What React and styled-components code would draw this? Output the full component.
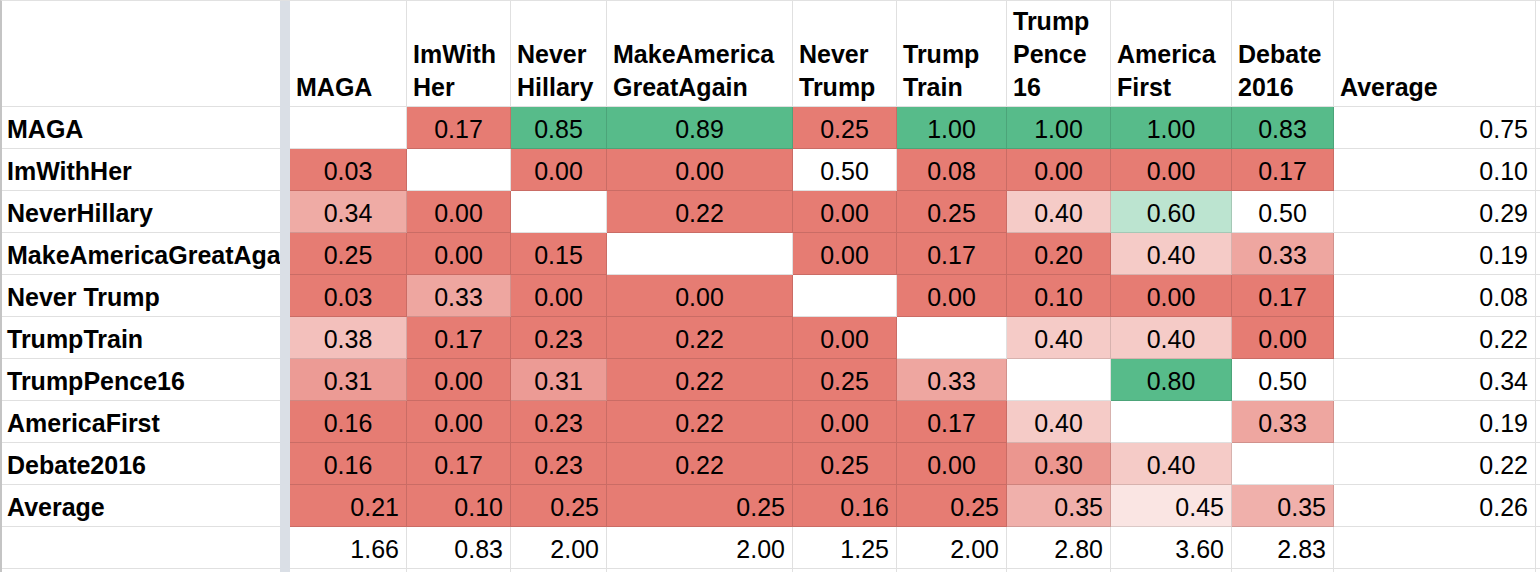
import React from "react";
import styled, { createGlobalStyle } from "styled-components";

const GlobalStyle = createGlobalStyle`
  html, body {
    margin: 0;
    padding: 0;
    background: #ffffff;
    overflow: hidden;
  }
  body {
    font-family: "Liberation Sans", Arial, sans-serif;
    color: #000;
  }
`;

const COLS = [
  "MAGA",
  "ImWith\nHer",
  "Never\nHillary",
  "MakeAmerica\nGreatAgain",
  "Never\nTrump",
  "Trump\nTrain",
  "Trump\nPence\n16",
  "America\nFirst",
  "Debate\n2016",
];

const ROWS = [
  ["MAGA", [null, 0.17, 0.85, 0.89, 0.25, 1.0, 1.0, 1.0, 0.83], 0.75],
  ["ImWithHer", [0.03, null, 0.0, 0.0, 0.5, 0.08, 0.0, 0.0, 0.17], 0.1],
  ["NeverHillary", [0.34, 0.0, null, 0.22, 0.0, 0.25, 0.4, 0.6, 0.5], 0.29],
  ["MakeAmericaGreatAgain", [0.25, 0.0, 0.15, null, 0.0, 0.17, 0.2, 0.4, 0.33], 0.19],
  ["Never Trump", [0.03, 0.33, 0.0, 0.0, null, 0.0, 0.1, 0.0, 0.17], 0.08],
  ["TrumpTrain", [0.38, 0.17, 0.23, 0.22, 0.0, null, 0.4, 0.4, 0.0], 0.22],
  ["TrumpPence16", [0.31, 0.0, 0.31, 0.22, 0.25, 0.33, null, 0.8, 0.5], 0.34],
  ["AmericaFirst", [0.16, 0.0, 0.23, 0.22, 0.0, 0.17, 0.4, null, 0.33], 0.19],
  ["Debate2016", [0.16, 0.17, 0.23, 0.22, 0.25, 0.0, 0.3, 0.4, null], 0.22],
];

const AVG_ROW = [0.21, 0.1, 0.25, 0.25, 0.16, 0.25, 0.35, 0.45, 0.35];
const AVG_ALL = 0.26;
const TOTALS = [1.66, 0.83, 2.0, 2.0, 1.25, 2.0, 2.8, 3.6, 2.83];

const RED = [230, 124, 115];
const GREEN = [87, 187, 138];
const WHITE = [255, 255, 255];

function mix(a, b, t) {
  const c = a.map((x, i) => Math.round(x + (b[i] - x) * t));
  return `rgb(${c[0]}, ${c[1]}, ${c[2]})`;
}

function scaleColor(v) {
  if (v === null || v === undefined) return "#ffffff";
  if (v < 0.5) {
    const t = Math.min(1, (0.5 - v) / 0.25);
    return mix(WHITE, RED, t);
  }
  const t = Math.min(1, (v - 0.5) / 0.25);
  return mix(WHITE, GREEN, t);
}

const fmt = (v) => (v === null || v === undefined ? "" : v.toFixed(2));

const Sheet = styled.div`
  display: grid;
  box-sizing: border-box;
  width: 1540px;
  height: 572px;
  overflow: hidden;
  grid-template-columns: 278px 10px 117px 104px 96px 186px 104px 110px 104px 121px 102px 202px 1fr;
  grid-template-rows: 106px repeat(12, 42px);
  border-left: 2px solid #c4c4c4;
  border-top: 1px solid #e1e1e1;
  background: #ffffff;
`;

const FreezeBar = styled.div`
  grid-column: 2;
  grid-row: 1 / -1;
  background: #dadfe6;
`;

const Cell = styled.div`
  box-sizing: border-box;
  display: flex;
  align-items: flex-end;
  justify-content: ${(p) =>
    p.$align === "center" ? "center" : p.$align === "right" ? "flex-end" : "flex-start"};
  min-width: 0;
  overflow: hidden;
  white-space: nowrap;
  padding: 0 7px 5px 7px;
  border-right: ${(p) => (p.$noRight ? "none" : "1px solid rgba(0, 0, 0, 0.12)")};
  border-bottom: 1px solid rgba(0, 0, 0, 0.12);
  background: ${(p) => p.$bg || "#ffffff"};
  font-family: "Liberation Sans", Arial, sans-serif;
  font-size: 25px;
  line-height: 28px;
  font-weight: ${(p) => (p.$bold ? 700 : 400)};
  color: #000;
`;

const HeaderCell = styled(Cell)`
  white-space: pre-line;
  line-height: 33px;
  padding: 0 6px 2px 6px;
  font-weight: 700;
`;

const RowLabel = styled(Cell)`
  padding-left: 5px;
  font-weight: 700;
`;

function DataRow({ label, values, avg }) {
  return (
    <>
      <RowLabel $noRight>{label}</RowLabel>
      {values.map((v, i) => (
        <Cell key={i} $align="center" $bg={scaleColor(v)}>
          {fmt(v)}
        </Cell>
      ))}
      <Cell $align="right">{fmt(avg)}</Cell>
      <Cell />
    </>
  );
}

export default function App() {
  return (
    <>
      <GlobalStyle />
      <Sheet>
        <FreezeBar />
        <HeaderCell $noRight />
        {COLS.map((c) => (
          <HeaderCell key={c}>{c}</HeaderCell>
        ))}
        <HeaderCell>Average</HeaderCell>
        <HeaderCell />

        {ROWS.map(([label, values, avg]) => (
          <DataRow key={label} label={label} values={values} avg={avg} />
        ))}

        <RowLabel $noRight>Average</RowLabel>
        {AVG_ROW.map((v, i) => (
          <Cell key={i} $align="right" $bg={scaleColor(v)}>
            {fmt(v)}
          </Cell>
        ))}
        <Cell $align="right">{fmt(AVG_ALL)}</Cell>
        <Cell />

        <RowLabel $noRight />
        {TOTALS.map((v, i) => (
          <Cell key={i} $align="right">
            {fmt(v)}
          </Cell>
        ))}
        <Cell />
        <Cell />

        <RowLabel $noRight />
        {TOTALS.map((v, i) => (
          <Cell key={i} />
        ))}
        <Cell />
        <Cell />
      </Sheet>
    </>
  );
}
